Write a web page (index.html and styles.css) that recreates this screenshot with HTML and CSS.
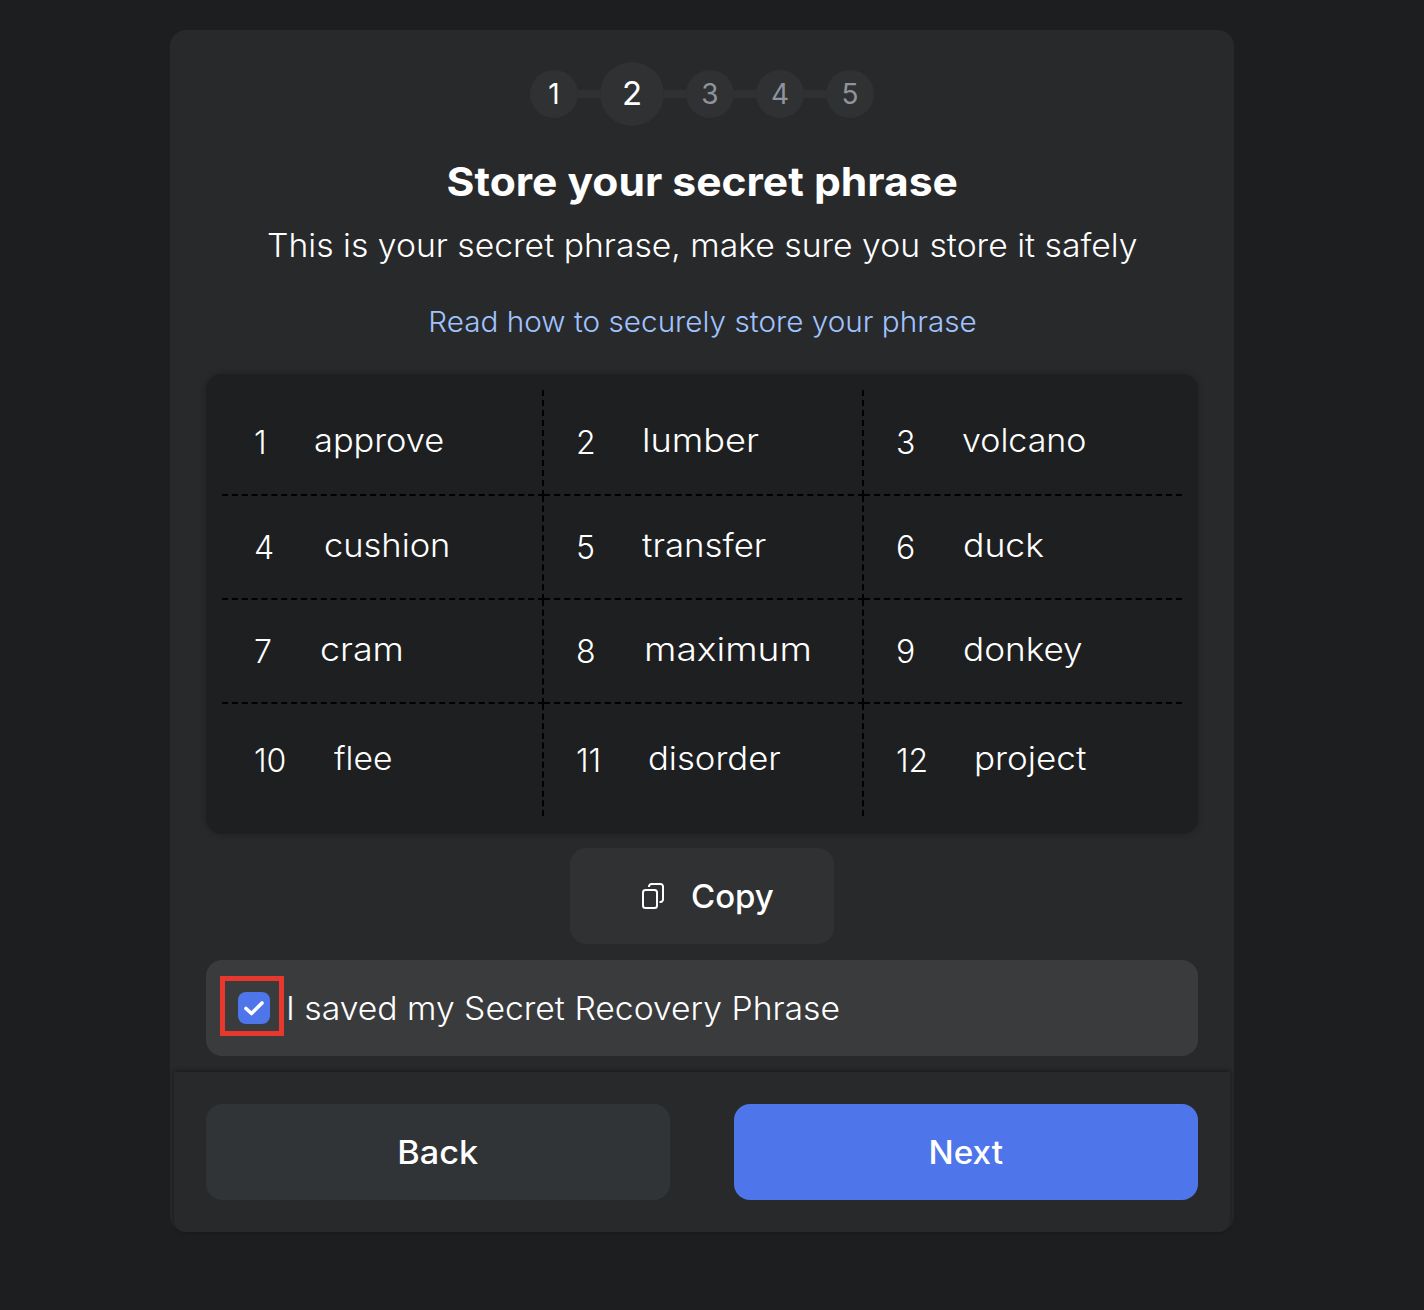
FILE: index.html
```html
<!DOCTYPE html>
<html lang="en">
<head>
<meta charset="utf-8">
<title>Store your secret phrase</title>
<link rel="stylesheet" href="styles.css">
</head>
<body>
<main class="panel">
  <section class="content">
    <div class="steps">
      <span class="step done">1</span><i class="link-bar"></i>
      <span class="step current">2</span><i class="link-bar"></i>
      <span class="step">3</span><i class="link-bar"></i>
      <span class="step">4</span><i class="link-bar"></i>
      <span class="step">5</span>
    </div>
    <h1 class="title">Store your secret phrase</h1>
    <p class="subtitle">This is your secret phrase, make sure you store it safely</p>
    <a class="help">Read how to securely store your phrase</a>
    <div class="phrase">
      <div class="cell approve"><span class="num">1</span><span class="word">approve</span></div>
      <div class="cell lumber"><span class="num">2</span><span class="word">lumber</span></div>
      <div class="cell volcano"><span class="num">3</span><span class="word">volcano</span></div>
      <div class="cell cushion"><span class="num">4</span><span class="word">cushion</span></div>
      <div class="cell transfer"><span class="num">5</span><span class="word">transfer</span></div>
      <div class="cell duck"><span class="num">6</span><span class="word">duck</span></div>
      <div class="cell cram"><span class="num">7</span><span class="word">cram</span></div>
      <div class="cell maximum"><span class="num">8</span><span class="word">maximum</span></div>
      <div class="cell donkey"><span class="num">9</span><span class="word">donkey</span></div>
      <div class="cell flee"><span class="num">10</span><span class="word">flee</span></div>
      <div class="cell disorder"><span class="num">11</span><span class="word">disorder</span></div>
      <div class="cell project"><span class="num">12</span><span class="word">project</span></div>
    </div>
    <button class="copy">
      <svg class="copy-icon" width="24" height="28" viewBox="0 0 24 28" fill="none" stroke="#fff" stroke-width="2">
        <rect x="1" y="8" width="14" height="18" rx="2.5"/>
        <path d="M7 5V4.500A2.500 2.500 0 0 1 9.500 2H18.500A2.500 2.500 0 0 1 21 4.500V17.500A2.500 2.500 0 0 1 18.500 20H17.500"/>
      </svg>
      <span class="copy-label">Copy</span>
    </button>
    <label class="confirm">
      <span class="highlight">
        <svg class="check" width="32" height="32" viewBox="0 0 32 32" fill="none">
          <rect width="32" height="32" rx="8" fill="#4f75ea"/>
          <path d="M8 16.500L13.500 21.500L24 11" stroke="#fff" stroke-width="3.600" stroke-linecap="round" stroke-linejoin="round"/>
        </svg>
      </span>
      <span class="confirm-text">I saved my Secret Recovery Phrase</span>
    </label>
  </section>
  <footer class="footer">
    <button class="btn back"><span class="btn-label">Back</span></button>
    <button class="btn next"><span class="btn-label">Next</span></button>
  </footer>
</main>
</body>
</html>
```
FILE: styles.css
```css
* { box-sizing: border-box; }
body {
  margin: 0;
  min-height: 1310px;
  background: #1d1e20;
  color: #fff;
  font: 300 32px/40px Inter, sans-serif;
}
button { border: 0; padding: 0; color: #fff; font: 500 32px/40px Inter, sans-serif; }

.panel {
  width: 1064px;
  height: 1202px;
  margin: 30px 0 0 170px;
  display: flex;
  flex-direction: column;
  background: #28292b;
  border-radius: 16px;
}
.content {
  height: 1042px;
  padding: 32px 36px 16px;
  display: flex;
  flex-direction: column;
  align-items: center;
}

.steps { display: flex; align-items: center; height: 64px; }
.step {
  width: 48px;
  height: 48px;
  border-radius: 50%;
  background: #303133;
  color: #8f949c;
  font-size: 28px;
  font-weight: 400;
  line-height: 48px;
  text-align: center;
}
.step.done { color: #fff; }
.step.current { width: 64px; height: 64px; color: #fff; font-size: 33px; line-height: 63px; }
.link-bar { width: 22px; height: 8px; background: #303133; }

/* Widened letterforms: each text is stretched horizontally by its own factor. */
.title { margin: 32px 0 0; font-size: 40px; font-weight: 700; line-height: 48px; white-space: nowrap; transform: scaleX(1.064); }
.subtitle { margin: 20px 0 0; white-space: nowrap; transform: scaleX(1.053); }
.help { margin-top: 36px; font-size: 28px; color: #a0c3ff; transform: scaleX(1.061); }

.phrase {
  width: 992px;
  height: 460px;
  margin-top: 32px;
  padding: 16px;
  display: grid;
  grid-template-columns: 322px 320px 318px;
  grid-template-rows: 106px 104px 104px 112px;
  background: #1e1f21;
  border-radius: 16px;
  box-shadow: 0 0 6px rgba(0, 0, 0, .25);
}
.cell {
  display: flex;
  align-items: center;
  padding-left: 32px;
  border: 0 dashed #000;
  border-right-width: 2px;
  border-bottom-width: 2px;
}
.cell:nth-child(3n) { border-right-width: 0; }
.cell:nth-child(n + 10) { border-bottom-width: 0; }
.num { width: 66px; padding-top: 2px; }
.word { padding-bottom: 2px; transform-origin: left; }
.approve .num { width: 60px; }
.cushion .num { width: 70px; }
.duck .num, .donkey .num { width: 67px; }
.maximum .num { width: 68px; }
.flee .num { width: 80px; }
.disorder .num { width: 72px; }
.project .num { width: 78px; }
.approve .word { transform: scaleX(1.074); }
.lumber .word { transform: scaleX(1.130); }
.volcano .word { transform: scaleX(1.062); }
.cushion .word { transform: scaleX(1.077); }
.transfer .word { transform: scaleX(1.088); }
.duck .word { transform: scaleX(1.110); }
.cram .word { transform: scaleX(1.120); }
.maximum .word { transform: scaleX(1.160); }
.donkey .word { transform: scaleX(1.098); }
.flee .word { transform: scaleX(1.050); }
.disorder .word { transform: scaleX(1.083); }
.project .word { transform: scaleX(1.094); }

.copy {
  width: 264px;
  height: 96px;
  margin-top: 14px;
  padding-left: 72px;
  display: flex;
  align-items: center;
  background: #303133;
  border-radius: 16px;
}
.copy-label { margin-left: 25px; padding-top: 2px; transform: scaleX(1.030); transform-origin: left; }

.confirm {
  width: 992px;
  height: 96px;
  margin-top: 16px;
  padding-left: 14px;
  display: flex;
  align-items: center;
  background: #3a3b3d;
  border-radius: 16px;
}
.highlight {
  width: 64px;
  height: 60px;
  margin-bottom: 4px;
  padding: 11px 0 0 13px;
  border: 5px solid #e8372c;
}
.check { display: block; }
.confirm-text { margin-left: 2px; padding-top: 1px; transform: scaleX(1.053); transform-origin: left; }

.footer {
  height: 160px;
  margin: 0 4px;
  padding: 32px;
  display: flex;
  justify-content: space-between;
  background: #28292b;
  border-radius: 0 0 12px 12px;
  box-shadow: 0 -1px 5px rgba(0, 0, 0, .45);
}
.btn { width: 464px; height: 96px; padding-top: 2px; border-radius: 16px; }
.btn-label { display: inline-block; }
.back { background: #303437; }
.next { background: #4f75ea; }
.back .btn-label { transform: scaleX(1.070); }
.next .btn-label { transform: scaleX(1.040); }
```
